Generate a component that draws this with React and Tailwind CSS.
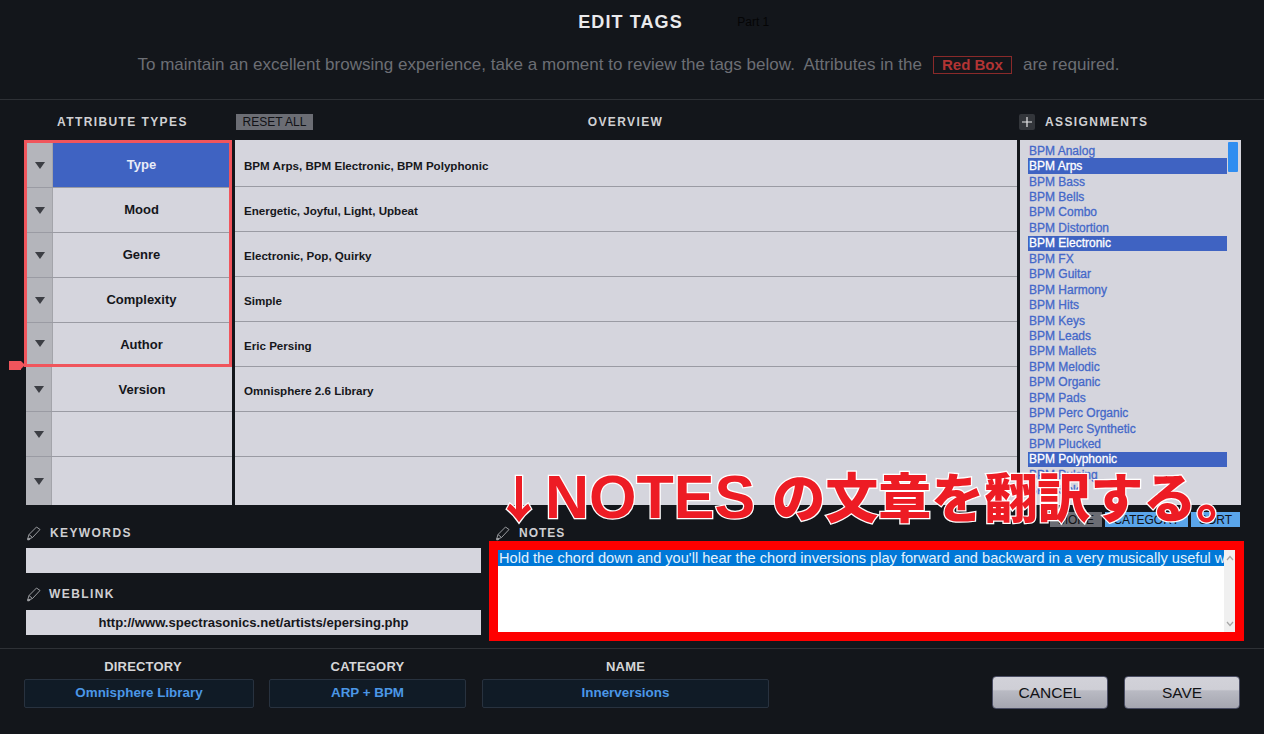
import React from "react";

const attributes = ["Type", "Mood", "Genre", "Complexity", "Author"];
const extraAttributes = ["Version", "", ""];

const overview = [
  "BPM Arps, BPM Electronic, BPM Polyphonic",
  "Energetic, Joyful, Light, Upbeat",
  "Electronic, Pop, Quirky",
  "Simple",
  "Eric Persing",
  "Omnisphere 2.6 Library",
  "",
  "",
];

const assignments = [
  "Analog", "Arps", "Bass", "Bells", "Combo", "Distortion", "Electronic", "FX",
  "Guitar", "Harmony", "Hits", "Keys", "Leads", "Mallets", "Melodic", "Organic",
  "Pads", "Perc Organic", "Perc Synthetic", "Plucked", "Polyphonic", "Pulsing", "Solo",
];
const selected = ["Arps", "Electronic", "Polyphonic"];

function PenIcon() {
  return (
    <svg width="16" height="16" viewBox="0 0 16 16" fill="none" stroke="#9a9ca0" strokeWidth="1" className="shrink-0">
      <path d="M1.5 14.5 L3 9.5 L10.5 2 L14 4.5 L6.5 12.5 Z" />
      <path d="M3 9.5 L6.5 12.5" />
      <path d="M1.5 14.5 L4 13.7" strokeWidth="2" />
    </svg>
  );
}

function Arrow() {
  return <span className="w-0 h-0 border-x-[5px] border-x-transparent border-t-[7px] border-t-[#3c3e44]" />;
}

function AttributeRow({ label, active, last, height, labelClass }) {
  return (
    <div className={`flex ${height} ${last ? "" : "border-b border-[#9a9ba3]"}`}>
      <div className="w-[26px] shrink-0 flex items-center justify-center bg-[#b4b5bb] border-r border-[#a3a4aa]">
        <Arrow />
      </div>
      <div className={`flex-1 flex items-center justify-center text-[13px] font-bold ${labelClass} ${active ? "bg-[#3f63c2] text-[#e8ecf8]" : "text-[#14151a]"}`}>
        {label}
      </div>
    </div>
  );
}

function Field({ children }) {
  return (
    <div className="h-[25px] bg-[#d5d5dd] flex items-center justify-center text-[13.1px] font-bold text-[#16171b]">
      {children}
    </div>
  );
}

function FooterField({ label, value, width, labelClass }) {
  return (
    <div className={`flex flex-col items-center ${width}`}>
      <div className={`h-[17px] flex items-center text-[13px] font-bold tracking-[0.2px] text-[#d6d6d8] ${labelClass}`}>{label}</div>
      <div className="mt-[4px] w-full h-[29px] flex items-center justify-center rounded-[2px] bg-[#101b26] border border-[#28323f] text-[13.4px] font-bold text-[#4b97e6]">
        {value}
      </div>
    </div>
  );
}

function GreyButton({ children }) {
  return (
    <button className="w-[116px] h-[33px] rounded-[4px] border border-[#4a4d63] bg-[linear-gradient(#d2d2d9_0%,#cfcfd6_40%,#b9bac3_45%,#a5a6b0_100%)] text-[15.5px] text-[#111216]">
      {children}
    </button>
  );
}

export default function App() {
  return (
    <div className="relative w-[1264px] h-[734px] overflow-hidden bg-[#13161b] font-['Liberation_Sans','Noto_Sans_CJK_JP',sans-serif]">
      {/* Header */}
      <div className="h-[100px] border-b border-[#2e3136] flex flex-col items-center">
        <div className="relative mt-[12px] mr-[3px] h-[20px] flex items-center">
          <h1 className="text-[18px] font-bold tracking-[1.1px] text-[#eaeaec]">EDIT TAGS</h1>
          <span className="absolute left-[159px] top-[1px] text-[12px] text-[#050506] whitespace-nowrap">Part 1</span>
        </div>
        <p className="mt-[22px] mr-[7px] h-[22px] flex items-center text-[17px] tracking-[0.02px] text-[#6c6e74] whitespace-pre">
          To maintain an excellent browsing experience, take a moment to review the tags below.  Attributes in the
          <span className="mx-[11px] h-[18px] px-[8px] flex items-center border border-[#8a2a2a] text-[15px] font-bold text-[#b23434]">Red Box</span>
          are required.
        </p>
      </div>

      {/* Column headings */}
      <div className="h-[40px] pt-[4px] flex items-center text-[12px] font-bold tracking-[1.4px] text-[#d0d0d3]">
        <div className="w-[236px] pl-[57px]">ATTRIBUTE TYPES</div>
        <div className="w-[77px] h-[16px] flex items-center justify-center bg-[#6b6d74] text-[12px] font-normal tracking-normal text-[#111216]">RESET ALL</div>
        <div className="w-[706px] pr-[81px] text-center">OVERVIEW</div>
        <div className="flex items-center gap-[10px]">
          <span className="w-[16px] h-[16px] flex items-center justify-center bg-[#33363b] rounded-[2px]">
            <svg width="12" height="12" viewBox="0 0 12 12" stroke="#e8e8ea" strokeWidth="1.2"><path d="M6 1v10M1 6h10" /></svg>
          </span>
          ASSIGNMENTS
        </div>
      </div>

      {/* Tables */}
      <div className="flex h-[365px] pl-[24px]">
        <div className="w-[208px] shrink-0 flex flex-col text-[#14151a]">
          <div className="border-[3px] border-[#f0555c] bg-[#d5d5dd]">
            {attributes.map((a, i) => (
              <AttributeRow
                key={a}
                label={a}
                active={i === 0}
                last={i === 4}
                height={i === 4 ? "h-[41px]" : "h-[45px]"}
                labelClass={i === 4 ? "pl-[1px] pt-[3px]" : "pl-[1px]"}
              />
            ))}
          </div>
          <div className="ml-[2px] flex-1 bg-[#d5d5dd] flex flex-col">
            {extraAttributes.map((a, i) => (
              <AttributeRow key={i} label={a} last={i === 2} height={i === 2 ? "flex-1" : "h-[45px] shrink-0"} labelClass="pt-[2px]" />
            ))}
          </div>
        </div>

        <div className="ml-[3px] w-[782px] shrink-0 bg-[#d5d5dd] flex flex-col">
          {overview.map((text, i) => (
            <div
              key={i}
              className={`pl-[9px] flex items-center text-[11.6px] font-bold text-[#16171b] ${i === 7 ? "flex-1 pt-[4px]" : i === 0 ? "h-[47px] pt-[6px] border-b border-[#9a9ba3]" : "h-[45px] pt-[4px] border-b border-[#9a9ba3]"}`}
            >
              {text}
            </div>
          ))}
        </div>

        <div className="relative ml-[3px] w-[221px] shrink-0 bg-[#d5d5dd] pt-[3px] pl-[8px] overflow-hidden">
          {assignments.map((name) => (
            <div
              key={name}
              className={`h-[15.45px] w-[199px] pl-[1px] flex items-center text-[12px] [-webkit-text-stroke:0.3px] ${selected.includes(name) ? "bg-[#3f63c2] text-white" : "text-[#4468c9]"}`}
            >
              BPM {name}
            </div>
          ))}
          <div className="absolute top-[2px] right-[3px] w-[10px] h-[30px] rounded-[1px] bg-[#2f8df0]" />
        </div>
      </div>

      {/* Keywords, weblink, notes */}
      <div className="flex pl-[26px] pr-[20px]">
        <div className="w-[455px] shrink-0 flex flex-col">
          <div className="mt-[19px] h-[18px] flex items-center gap-[8px] text-[12px] font-bold tracking-[1.4px] text-[#cfcfd2]">
            <PenIcon />
            KEYWORDS
          </div>
          <div className="mt-[6px]"><Field /></div>
          <div className="mt-[12px] h-[18px] flex items-center gap-[7px] text-[12px] font-bold tracking-[1.4px] text-[#cfcfd2]">
            <PenIcon />
            WEBLINK
          </div>
          <div className="mt-[7px]"><Field>http://www.spectrasonics.net/artists/epersing.php</Field></div>
        </div>

        <div className="ml-[8px] flex-1 min-w-0 flex flex-col">
          <div className="h-[36px] flex">
            <div className="mt-[19px] ml-[6px] h-[17px] flex items-center gap-[8px] text-[12px] font-bold tracking-[1px] text-[#cfcfd2]">
              <PenIcon />
              NOTES
            </div>
            <div className="ml-auto mt-[7px] mr-[4px] flex gap-[3px] text-[12px] text-[#111216]">
              <div className="w-[52px] h-[15px] flex items-center justify-center bg-[#6b6d74]">MORE</div>
              <div className="w-[83px] h-[15px] flex items-center justify-center bg-[#5aa5ea]">CATEGORY</div>
              <div className="w-[49px] h-[15px] flex items-center justify-center bg-[#5aa5ea]">SORT</div>
            </div>
          </div>
          <div className="h-[100px] border-[9px] border-[#fe0000] bg-white flex">
            <div className="flex-1 min-w-0 overflow-hidden">
              <div className="h-[16px] pt-[1px] flex items-center bg-[#0078d7] text-[14.6px] text-[#e6f2fc] whitespace-nowrap pl-[1px]">
                Hold the chord down and you'll hear the chord inversions play forward and backward in a very musically useful way
              </div>
            </div>
            <div className="w-[11px] shrink-0 bg-[#f0f0f0] flex flex-col items-center justify-between py-[5px] text-[#a6a6a6]">
              <svg width="8" height="6" viewBox="0 0 8 6" fill="none" stroke="currentColor" strokeWidth="1.2"><path d="M1 5l3-3.5L7 5" /></svg>
              <svg width="8" height="6" viewBox="0 0 8 6" fill="none" stroke="currentColor" strokeWidth="1.2"><path d="M1 1l3 3.5L7 1" /></svg>
            </div>
          </div>
        </div>
      </div>

      {/* Footer */}
      <div className="mt-[7px] border-t border-[#2e3136] pl-[24px] pr-[24px] pt-[9px] flex">
        <div className="flex gap-[15px]">
          <FooterField label="DIRECTORY" value="Omnisphere Library" width="w-[230px]" labelClass="pl-[8px]" />
          <FooterField label="CATEGORY" value="ARP + BPM" width="w-[197px]" />
          <div className="ml-[1px]"><FooterField label="NAME" value="Innerversions" width="w-[287px]" /></div>
        </div>
        <div className="ml-auto mt-[18px] flex gap-[16px]">
          <GreyButton>CANCEL</GreyButton>
          <GreyButton>SAVE</GreyButton>
        </div>
      </div>

      {/* Marker on the left edge */}
      <div className="absolute left-[9px] top-[361px] w-[12px] h-[9px] bg-[#f0555c]" />
      <div className="absolute left-[21px] top-[361px] w-0 h-0 border-y-[4.5px] border-y-transparent border-l-[4px] border-l-[#f0555c]" />

      {/* Annotation over the screenshot */}
      <div className="absolute left-[494px] top-[455px] flex items-baseline whitespace-nowrap leading-[80px] font-black text-[#ed1c24] [-webkit-text-stroke:2.5px_white] [paint-order:stroke_fill]">
        <span className="text-[50px] font-['Noto_Sans_CJK_JP',sans-serif]">↓</span>
        <span className="ml-[1px] text-[61px] font-bold">NOTES</span>
        <span className="ml-[17px] text-[53px] font-['Noto_Sans_CJK_JP',sans-serif]">の文章を翻訳する。</span>
      </div>
    </div>
  );
}
